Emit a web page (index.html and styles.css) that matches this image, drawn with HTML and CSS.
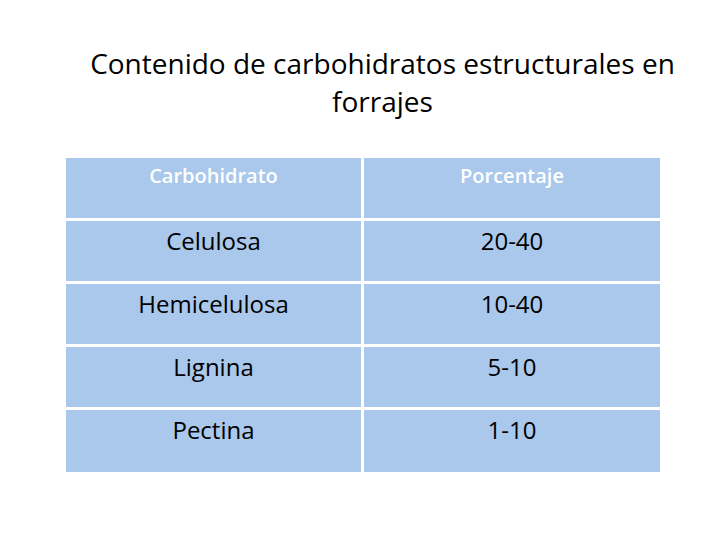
FILE: index.html
```html
<!DOCTYPE html>
<html lang="es">
<head>
<meta charset="utf-8">
<title>Carbohidratos estructurales</title>
<link rel="stylesheet" href="styles.css">
</head>
<body>
<div class="slide">
  <h1 class="title">Contenido de carbohidratos estructurales en forrajes</h1>
  <table class="data">
    <thead>
      <tr><th>Carbohidrato</th><th>Porcentaje</th></tr>
    </thead>
    <tbody>
      <tr><td>Celulosa</td><td>20-40</td></tr>
      <tr><td>Hemicelulosa</td><td>10-40</td></tr>
      <tr><td>Lignina</td><td>5-10</td></tr>
      <tr><td>Pectina</td><td>1-10</td></tr>
    </tbody>
  </table>
</div>
</body>
</html>
```
FILE: styles.css
```css
html, body {
  margin: 0;
  padding: 0;
  background: #ffffff;
}
.slide {
  width: 720px;
  height: 540px;
  font-family: "Open Sans", "Liberation Sans", sans-serif;
  color: #000000;
  padding-top: 44px;
  box-sizing: border-box;
}
.title {
  margin: 0 0 0 82px;
  width: 601px;
  text-align: center;
  font-weight: normal;
  font-size: 28px;
  line-height: 38px;
}
.data {
  margin: 38px 0 0 66px;
  width: 594px;
  border-collapse: separate;
  border-spacing: 0;
  table-layout: fixed;
}
.data th, .data td {
  background: #a9c8eb;
  text-align: center;
  vertical-align: top;
  box-sizing: border-box;
  border-bottom: 3px solid #ffffff;
}
.data tbody tr:last-child td {
  border-bottom: none;
  height: 62px;
}
.data th:first-child, .data td:first-child {
  width: 298px;
  border-right: 3px solid #ffffff;
}
.data th {
  color: #ffffff;
  font-weight: 600;
  font-size: 20px;
  line-height: 24px;
  padding: 6px 0 0;
  height: 63px;
}
.data td {
  font-size: 24px;
  line-height: 30px;
  padding: 5px 0 0;
  height: 63px;
}
```
